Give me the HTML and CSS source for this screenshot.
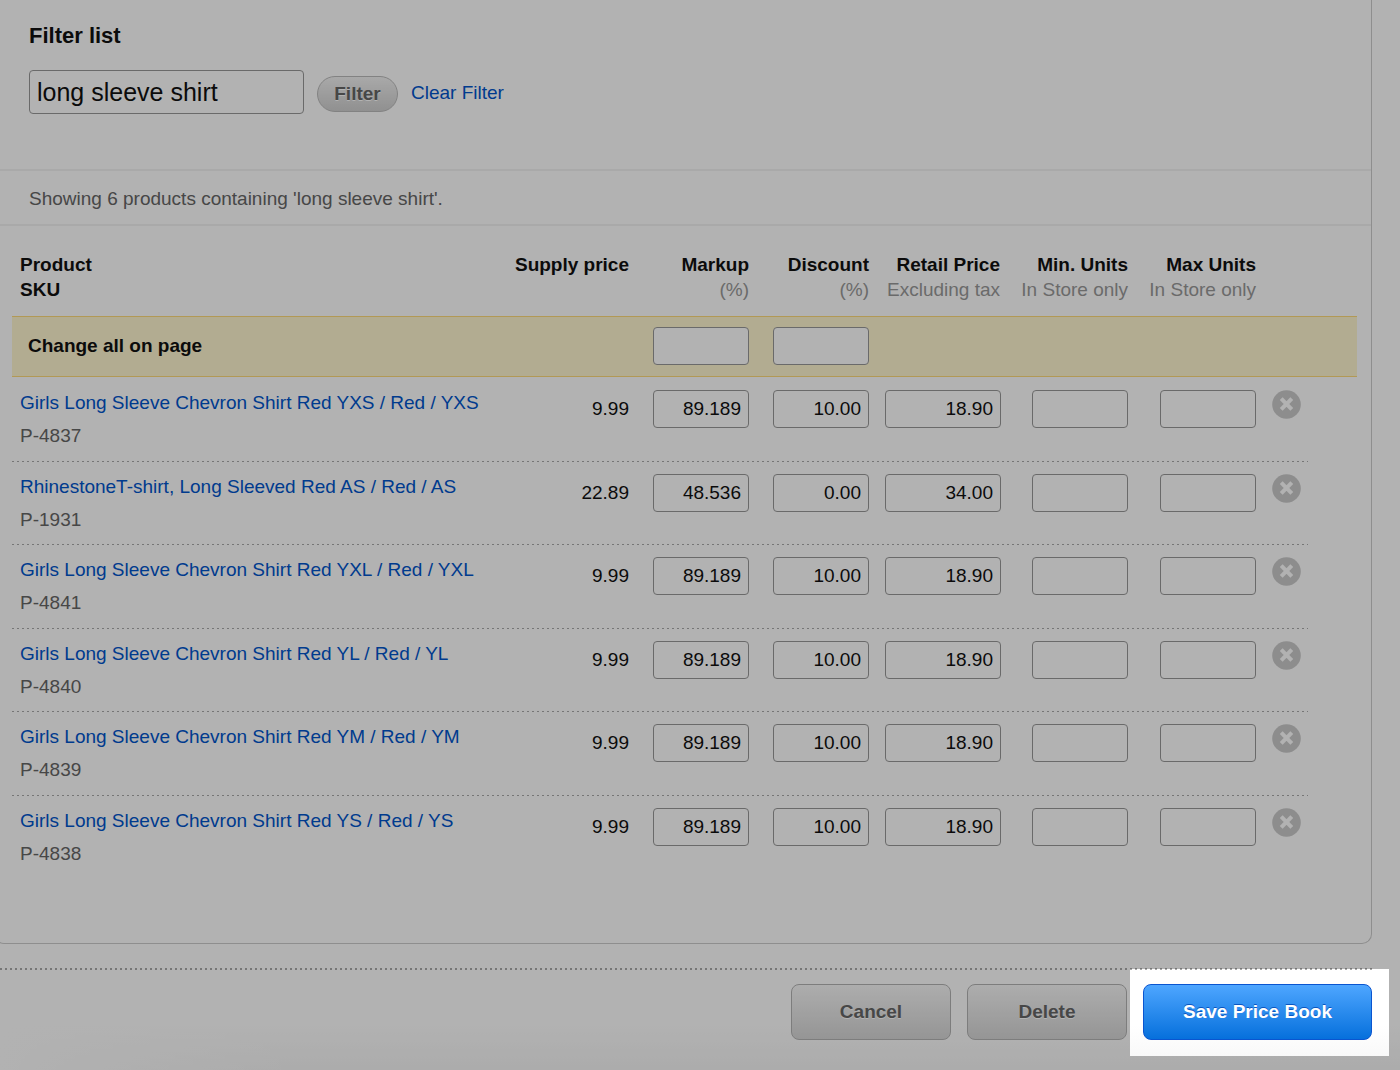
FILE: index.html
```html
<!DOCTYPE html>
<html lang="en">
<head>
<meta charset="utf-8">
<meta name="viewport" content="width=device-width, initial-scale=1">
<title>Edit Price Book</title>
<link rel="stylesheet" href="styles.css">
</head>
<body>
<svg class="sprite" aria-hidden="true">
  <symbol id="icon-remove" viewBox="0 0 29 29">
    <circle cx="14.5" cy="14.5" r="14.3" fill="#cbcbcb"/>
    <path d="M9.2 8.7l10.6 10.6M19.8 8.7L9.2 19.3" stroke="#fff" stroke-width="4" fill="none"/>
  </symbol>
</svg>
<form class="page">
  <main class="panel">
    <section class="filter">
      <h2 class="filter-title"><label for="filter">Filter list</label></h2>
      <div class="filter-row">
        <input class="field filter-input" id="filter" type="text" value="long sleeve shirt">
        <button class="filter-button" type="button">Filter</button>
        <a class="link" href="#">Clear Filter</a>
      </div>
    </section>
    <p class="summary">Showing 6 products containing 'long sleeve shirt'.</p>
    <div class="products">
      <table class="table">
        <colgroup>
          <col><col class="col-supply"><col class="col-percent"><col class="col-percent"><col class="col-retail"><col class="col-units"><col class="col-units"><col class="col-remove"><col class="col-end">
        </colgroup>
        <thead>
          <tr class="head">
            <th class="name" scope="col">Product<br>SKU</th>
            <th scope="col">Supply price</th>
            <th scope="col">Markup<small>(%)</small></th>
            <th scope="col">Discount<small>(%)</small></th>
            <th scope="col">Retail Price<small>Excluding tax</small></th>
            <th scope="col">Min. Units<small>In Store only</small></th>
            <th scope="col">Max Units<small>In Store only</small></th>
            <td></td><td></td>
          </tr>
          <tr class="change-all">
            <th class="name" scope="row" colspan="2">Change all on page</th>
            <td><input class="field" type="text" aria-label="Markup for all"></td>
            <td><input class="field" type="text" aria-label="Discount for all"></td>
            <td colspan="5"></td>
          </tr>
        </thead>
        <tbody>
          <tr>
            <td class="name"><a class="link" href="#">Girls Long Sleeve Chevron Shirt Red YXS / Red / YXS</a><span class="sku">P-4837</span></td>
            <td class="supply">9.99</td>
            <td><input class="field" type="text" aria-label="Markup" value="89.189"></td>
            <td><input class="field" type="text" aria-label="Discount" value="10.00"></td>
            <td><input class="field" type="text" aria-label="Retail price" value="18.90"></td>
            <td><input class="field" type="text" aria-label="Min. units"></td>
            <td><input class="field" type="text" aria-label="Max units"></td>
            <td><button class="remove" type="button" aria-label="Remove"><svg><use href="#icon-remove"/></svg></button></td>
          </tr>
          <tr>
            <td class="name"><a class="link" href="#">RhinestoneT-shirt, Long Sleeved Red AS / Red / AS</a><span class="sku">P-1931</span></td>
            <td class="supply">22.89</td>
            <td><input class="field" type="text" aria-label="Markup" value="48.536"></td>
            <td><input class="field" type="text" aria-label="Discount" value="0.00"></td>
            <td><input class="field" type="text" aria-label="Retail price" value="34.00"></td>
            <td><input class="field" type="text" aria-label="Min. units"></td>
            <td><input class="field" type="text" aria-label="Max units"></td>
            <td><button class="remove" type="button" aria-label="Remove"><svg><use href="#icon-remove"/></svg></button></td>
          </tr>
          <tr>
            <td class="name"><a class="link" href="#">Girls Long Sleeve Chevron Shirt Red YXL / Red / YXL</a><span class="sku">P-4841</span></td>
            <td class="supply">9.99</td>
            <td><input class="field" type="text" aria-label="Markup" value="89.189"></td>
            <td><input class="field" type="text" aria-label="Discount" value="10.00"></td>
            <td><input class="field" type="text" aria-label="Retail price" value="18.90"></td>
            <td><input class="field" type="text" aria-label="Min. units"></td>
            <td><input class="field" type="text" aria-label="Max units"></td>
            <td><button class="remove" type="button" aria-label="Remove"><svg><use href="#icon-remove"/></svg></button></td>
          </tr>
          <tr>
            <td class="name"><a class="link" href="#">Girls Long Sleeve Chevron Shirt Red YL / Red / YL</a><span class="sku">P-4840</span></td>
            <td class="supply">9.99</td>
            <td><input class="field" type="text" aria-label="Markup" value="89.189"></td>
            <td><input class="field" type="text" aria-label="Discount" value="10.00"></td>
            <td><input class="field" type="text" aria-label="Retail price" value="18.90"></td>
            <td><input class="field" type="text" aria-label="Min. units"></td>
            <td><input class="field" type="text" aria-label="Max units"></td>
            <td><button class="remove" type="button" aria-label="Remove"><svg><use href="#icon-remove"/></svg></button></td>
          </tr>
          <tr>
            <td class="name"><a class="link" href="#">Girls Long Sleeve Chevron Shirt Red YM / Red / YM</a><span class="sku">P-4839</span></td>
            <td class="supply">9.99</td>
            <td><input class="field" type="text" aria-label="Markup" value="89.189"></td>
            <td><input class="field" type="text" aria-label="Discount" value="10.00"></td>
            <td><input class="field" type="text" aria-label="Retail price" value="18.90"></td>
            <td><input class="field" type="text" aria-label="Min. units"></td>
            <td><input class="field" type="text" aria-label="Max units"></td>
            <td><button class="remove" type="button" aria-label="Remove"><svg><use href="#icon-remove"/></svg></button></td>
          </tr>
          <tr>
            <td class="name"><a class="link" href="#">Girls Long Sleeve Chevron Shirt Red YS / Red / YS</a><span class="sku">P-4838</span></td>
            <td class="supply">9.99</td>
            <td><input class="field" type="text" aria-label="Markup" value="89.189"></td>
            <td><input class="field" type="text" aria-label="Discount" value="10.00"></td>
            <td><input class="field" type="text" aria-label="Retail price" value="18.90"></td>
            <td><input class="field" type="text" aria-label="Min. units"></td>
            <td><input class="field" type="text" aria-label="Max units"></td>
            <td><button class="remove" type="button" aria-label="Remove"><svg><use href="#icon-remove"/></svg></button></td>
          </tr>
        </tbody>
      </table>
    </div>
  </main>
  <footer class="actions">
    <button class="button" type="button">Cancel</button>
    <button class="button" type="button">Delete</button>
    <div class="spotlight"><button class="button primary" type="submit">Save Price Book</button></div>
  </footer>
</form>
</body>
</html>
```
FILE: styles.css
```css
:root {
  --dots: repeating-linear-gradient(90deg, #aaa 0 2px, transparent 2px 5px);
}

* {
  box-sizing: border-box;
}

body {
  margin: 0;
  background: #fff;
  color: #111;
  font: 19px/25px "Liberation Sans", Arial, sans-serif;
}

input,
button {
  font: inherit;
}

.sprite {
  display: none;
}

.page {
  min-height: 100vh;
  overflow: hidden;
}

.panel {
  margin: 0 28px 0 -6px;
  padding-left: 5px;
  padding-bottom: 65px;
  border: 1px solid #ccc;
  border-top: 0;
  border-radius: 0 0 10px 10px;
}

.link {
  color: #0055cc;
  text-decoration: none;
}

.field {
  display: block;
  width: 100%;
  height: 38px;
  padding: 0 7px;
  border: 1px solid #999;
  border-radius: 4px;
  background: #fff;
  color: #111;
  text-align: right;
}

/* Filter */
.filter {
  padding: 22px 29px 55px;
  border-bottom: 2px solid #f2f2f2;
}

.filter-title {
  margin: 0 0 20px;
  font-size: 22px;
  line-height: 28px;
}

.filter-row {
  display: flex;
  align-items: center;
}

.filter-input {
  width: 275px;
  height: 44px;
  font-size: 25px;
  text-align: left;
}

.filter-button {
  width: 81px;
  height: 36px;
  margin: 4px 13px 0;
  padding: 0 0 2px;
  border: 1px solid #bbb;
  border-radius: 18px;
  background: linear-gradient(#f2f2f2, #cfcfcf);
  color: #666;
  font-weight: bold;
  text-shadow: 0 1px 0 #fff;
}

.summary {
  margin: 0;
  padding: 15px 29px 13px;
  border-bottom: 2px solid #f2f2f2;
  color: #666;
}

/* Product table */
.products {
  padding: 20px 14px 0 12px;
}

.table {
  width: 100%;
  border-spacing: 0;
  table-layout: fixed;
}

.col-supply { width: 140px; }
.col-percent { width: 120px; }
.col-retail { width: 131px; }
.col-units { width: 128px; }
.col-remove { width: 44px; }
.col-end { width: 49px; }

.table th,
.table td {
  padding: 0 8px;
  text-align: right;
  vertical-align: top;
  white-space: nowrap;
}

.table .name {
  text-align: left;
}

.head th {
  height: 70px;
  padding-top: 6px;
}

.head small {
  display: block;
  color: #999;
  font-size: 19px;
  font-weight: normal;
}

.change-all > * {
  height: 61px;
  border: solid #ffdc7a;
  border-width: 1px 0;
  background: #fff6d0;
}

.table .change-all > * {
  padding-top: 10px;
}

.table .change-all .name {
  padding: 16px 16px 0;
}

.table td .field {
  width: 96px;
  margin-left: auto;
}

.table tbody td:nth-child(5) .field {
  width: 116px;
}

.table tbody td {
  height: 83px;
  padding-top: 13px;
}

.table tbody tr:nth-child(odd) td {
  height: 84px;
}

tbody tr + tr {
  background: var(--dots) 0 0 / 100% 1px no-repeat;
}

tbody .name > * {
  display: block;
}

.sku {
  margin-top: 8px;
  color: #666;
}

.table tbody .supply {
  padding-top: 19px;
}

.remove {
  display: block;
  width: 29px;
  height: 29px;
  padding: 0;
  border: 0;
  background: none;
}

.remove svg {
  display: block;
  width: 29px;
  height: 29px;
}

/* Form actions */
.actions {
  display: flex;
  justify-content: flex-end;
  gap: 16px;
  margin-top: 24px;
  padding: 16px 28px 31px 0;
  background:
    var(--dots) 0 0 / calc(100% - 28px) 2px no-repeat,
    linear-gradient(90deg, #fff, transparent 300px) 0 100% / 100% 46px no-repeat,
    linear-gradient(transparent, #f6f6f6) 0 100% / 100% 46px no-repeat;
}

.button {
  width: 160px;
  height: 56px;
  padding: 0 0 2px;
  border: 1px solid #b4b4b4;
  border-radius: 8px;
  background: linear-gradient(#f8f8f8, #d6d6d6);
  color: #666;
  font-weight: bold;
  text-shadow: 0 1px 0 #fff;
}

.primary {
  display: block;
  width: 229px;
  border-color: #0a55d0;
  background: linear-gradient(#4ea6ff, #0670dc);
  color: #fff;
  text-shadow: 0 -1px 0 #0a55c0;
}

/* Dims the whole page except the area around the button */
.spotlight {
  position: relative;
}

.spotlight::after {
  content: "";
  position: absolute;
  inset: -15px -17px -16px -13px;
  box-shadow: 0 0 0 200vmax rgba(0, 0, 0, 0.3);
  pointer-events: none;
}
```
